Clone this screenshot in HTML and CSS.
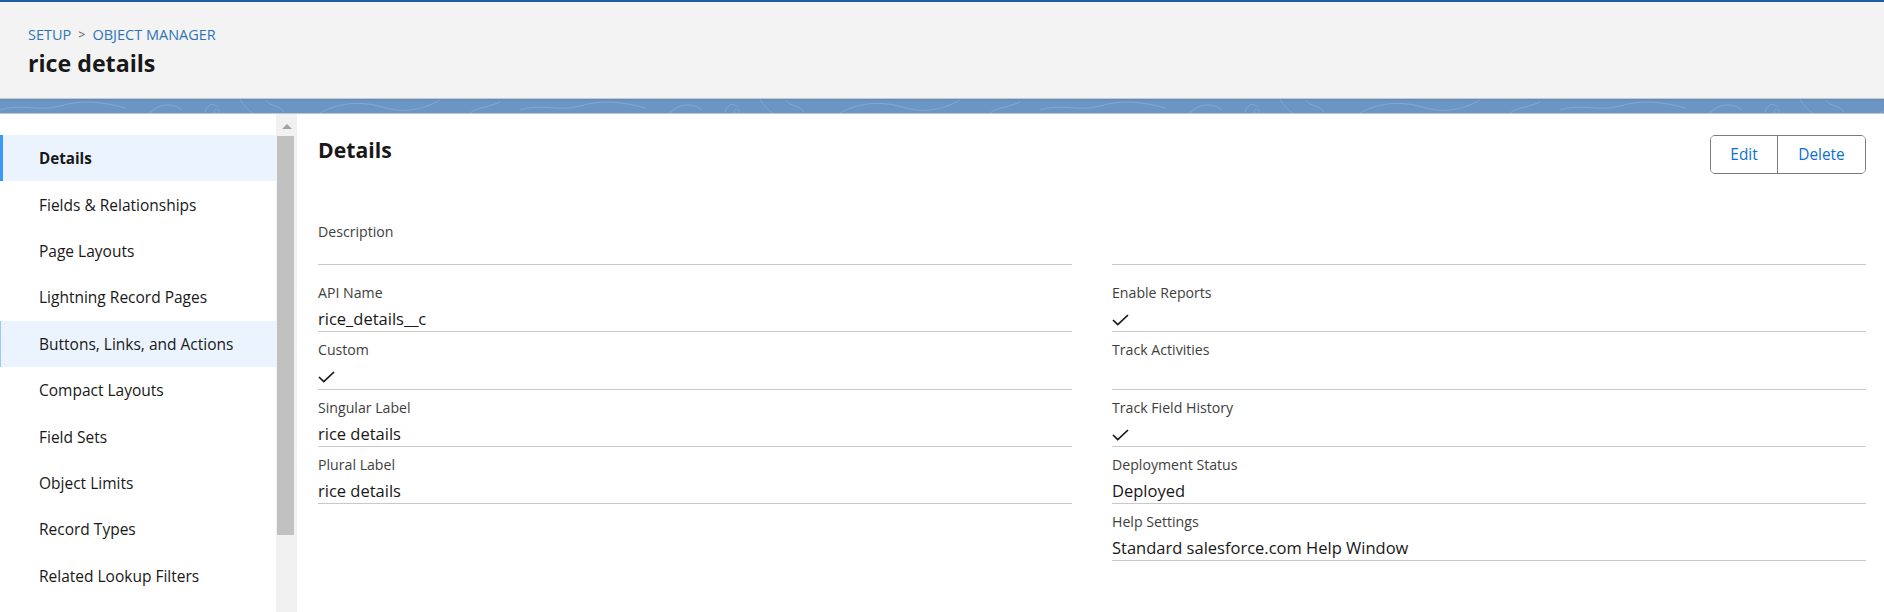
FILE: index.html
```html
<!DOCTYPE html>
<html lang="en">
<head>
<meta charset="utf-8">
<title>rice details | Object Manager</title>
<link rel="stylesheet" href="styles.css">
</head>
<body>
<div class="topline"></div>
<header class="header">
  <div class="crumbs"><a class="crumb">SETUP</a><span class="sep">&gt;</span><a class="crumb">OBJECT MANAGER</a></div>
  <h1 class="title">rice details</h1>
</header>
<div class="band">
  <svg class="band-art" width="100%" height="14" preserveAspectRatio="none">
    <defs>
      <pattern id="topo" width="520" height="14" patternUnits="userSpaceOnUse">
        <path d="M0 11 C20 4 40 13 60 7 S100 2 125 9" fill="none" stroke="#88acd6" stroke-width="1" opacity="0.8"/>
        <path d="M150 14 C158 5 172 3 182 11" fill="none" stroke="#88acd6" stroke-width="1" opacity="0.8"/>
        <path d="M205 13 C207 6 212 3 218 8 M216 10 a2.5 2.5 0 1 0 1 0" fill="none" stroke="#88acd6" stroke-width="1" opacity="0.8"/>
        <path d="M240 0 C243 6 248 10 252 14 M266 1 C270 8 278 5 284 13" fill="none" stroke="#88acd6" stroke-width="1" opacity="0.8"/>
        <path d="M320 14 C340 3 362 2 382 8 S420 12 440 1" fill="none" stroke="#88acd6" stroke-width="1" opacity="0.8"/>
        <path d="M470 14 C478 8 490 8 500 3" fill="none" stroke="#88acd6" stroke-width="1" opacity="0.8"/>
      </pattern>
    </defs>
    <rect width="100%" height="14" fill="url(#topo)"/>
  </svg>
</div>
<div class="page">
  <aside class="sidebar">
    <nav class="nav">
      <a class="nav-item is-active">Details</a>
      <a class="nav-item">Fields &amp; Relationships</a>
      <a class="nav-item">Page Layouts</a>
      <a class="nav-item">Lightning Record Pages</a>
      <a class="nav-item is-hover">Buttons, Links, and Actions</a>
      <a class="nav-item">Compact Layouts</a>
      <a class="nav-item">Field Sets</a>
      <a class="nav-item">Object Limits</a>
      <a class="nav-item">Record Types</a>
      <a class="nav-item">Related Lookup Filters</a>
    </nav>
    <div class="scrollbar">
      <div class="scroll-arrow"></div>
      <div class="scroll-thumb"></div>
    </div>
  </aside>
  <main class="main">
    <div class="main-head">
      <h2 class="heading">Details</h2>
      <div class="btn-group">
        <button class="btn btn-edit">Edit</button>
        <button class="btn btn-delete">Delete</button>
      </div>
    </div>
    <div class="columns">
      <div class="col">
        <div class="field field-first">
          <div class="label">Description</div>
          <div class="value"></div>
        </div>
        <div class="field">
          <div class="label">API Name</div>
          <div class="value">rice_details__c</div>
        </div>
        <div class="field">
          <div class="label">Custom</div>
          <div class="value"><svg class="check" width="17" height="12" viewBox="0 0 17 12"><polyline points="1,6 5.8,10.6 16,1" fill="none" stroke="#181818" stroke-width="1.7"/></svg></div>
        </div>
        <div class="field">
          <div class="label">Singular Label</div>
          <div class="value">rice details</div>
        </div>
        <div class="field">
          <div class="label">Plural Label</div>
          <div class="value">rice details</div>
        </div>
      </div>
      <div class="col">
        <div class="field field-first field-blank">
          <div class="value"></div>
        </div>
        <div class="field">
          <div class="label">Enable Reports</div>
          <div class="value"><svg class="check" width="17" height="12" viewBox="0 0 17 12"><polyline points="1,6 5.8,10.6 16,1" fill="none" stroke="#181818" stroke-width="1.7"/></svg></div>
        </div>
        <div class="field">
          <div class="label">Track Activities</div>
          <div class="value"></div>
        </div>
        <div class="field">
          <div class="label">Track Field History</div>
          <div class="value"><svg class="check" width="17" height="12" viewBox="0 0 17 12"><polyline points="1,6 5.8,10.6 16,1" fill="none" stroke="#181818" stroke-width="1.7"/></svg></div>
        </div>
        <div class="field">
          <div class="label">Deployment Status</div>
          <div class="value">Deployed</div>
        </div>
        <div class="field">
          <div class="label">Help Settings</div>
          <div class="value">Standard salesforce.com Help Window</div>
        </div>
      </div>
    </div>
  </main>
</div>
</body>
</html>
```
FILE: styles.css
```css
* { box-sizing: border-box; }
html, body { margin: 0; padding: 0; }
body {
  font-family: "Open Sans", "Noto Sans", sans-serif;
  color: #181818;
  background: #fff;
  overflow: hidden;
  height: 612px;
}
.topline { height: 2px; background: #1f5da3; }
.header {
  height: 97px;
  background: #f3f3f3;
  border-bottom: 1px solid #c9c9c9;
  padding: 23px 0 0 28px;
  box-shadow: 0 1px 2px rgba(0,0,0,0.08);
  position: relative;
  z-index: 1;
}
.crumbs {
  font-size: 14.5px;
  line-height: 20px;
  color: #2f73b6;
  display: flex;
  align-items: center;
}
.crumb { color: #2f73b6; }
.sep { color: #555; margin: 0 7px; font-size: 12.5px; }
.title {
  margin: 3px 0 0;
  font-size: 23.2px;
  line-height: 31px;
  font-weight: 700;
  color: #181818;
}
.band {
  height: 15px;
  background: #6a95c5;
  border-bottom: 1px solid #c3c7cc;
  overflow: hidden;
}
.band-art { display: block; }
.page {
  display: flex;
  height: 498px;
}
.sidebar {
  width: 297px;
  flex: none;
  display: flex;
}
.nav {
  width: 276px;
  padding-top: 21px;
  display: flex;
  flex-direction: column;
}
.nav-item {
  height: 46.4px;
  display: flex;
  align-items: center;
  padding-left: 36px;
  font-size: 15.5px;
  color: #181818;
  border-left: 3px solid transparent;
}
.nav-item.is-active {
  background: #ebf4fe;
  border-left-color: #3a9af5;
  font-weight: 700;
  font-size: 15.2px;
}
.nav-item.is-hover {
  background: #ebf4fe;
  border-left: 1px solid #9cc8f5;
  padding-left: 38px;
}
.scrollbar {
  width: 21px;
  background: #f1f1f1;
  display: flex;
  flex-direction: column;
  align-items: center;
}
.scroll-arrow {
  margin-top: 10px;
  width: 0;
  height: 0;
  border-left: 5px solid transparent;
  border-right: 5px solid transparent;
  border-bottom: 5px solid #a3a3a3;
}
.scroll-thumb {
  margin-top: 7px;
  width: 17px;
  height: 399px;
  background: #c1c1c1;
  margin-left: -2px;
}
.main {
  flex: 1;
  padding: 21px 18px 0 21px;
}
.main-head {
  display: flex;
  justify-content: space-between;
  align-items: flex-start;
}
.heading {
  margin: 1px 0 0;
  font-size: 21.2px;
  line-height: 28px;
  font-weight: 700;
  color: #181818;
}
.btn-group {
  display: flex;
  height: 39px;
  border: 1px solid #7b7b7b;
  border-radius: 5px;
  overflow: hidden;
}
.btn {
  font-family: inherit;
  font-size: 15.4px;
  color: #0b6fd6;
  background: #fff;
  border: 0;
  padding: 0;
  height: 37px;
}
.btn-edit { width: 67px; border-right: 1px solid #7b7b7b; }
.btn-delete { width: 87px; }
.columns {
  margin-top: 39.7px;
  display: grid;
  grid-template-columns: 1fr 1fr;
  column-gap: 40px;
  align-items: start;
}
.field {
  padding-top: 7px;
  border-bottom: 1px solid #c9c9c9;
}
.label {
  font-size: 14.15px;
  line-height: 22px;
  color: #3e3e3c;
}
.value {
  margin-top: 2px;
  font-size: 16.5px;
  line-height: 25.3px;
  height: 25.3px;
  color: #181818;
  display: flex;
  align-items: center;
}
.field-first { margin-bottom: 10px; }
.field-first .value { height: 19.3px; }
.field-blank { padding-top: 29px; }
.check { display: block; margin-top: 3px; }
```
